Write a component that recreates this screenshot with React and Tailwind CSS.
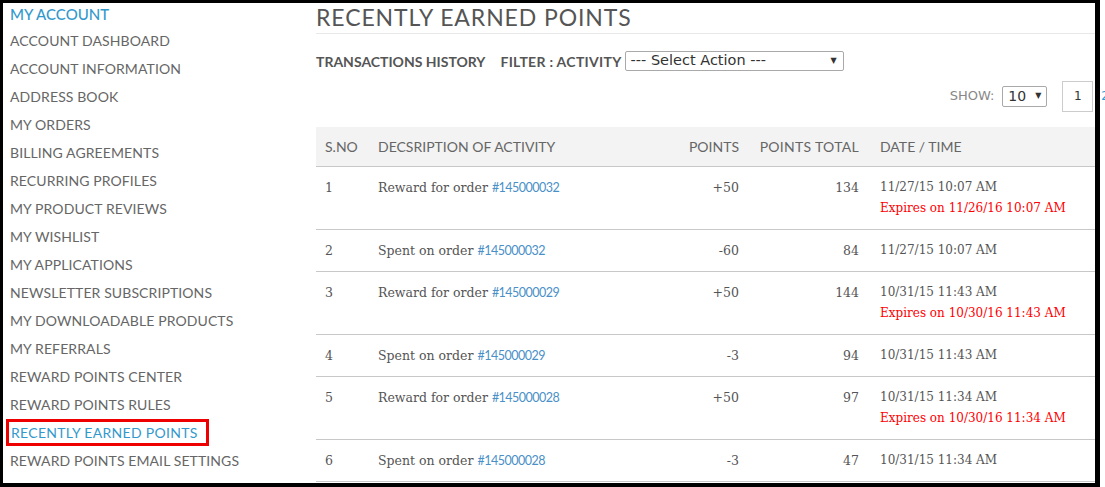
const sideLinks = [
  "ACCOUNT DASHBOARD",
  "ACCOUNT INFORMATION",
  "ADDRESS BOOK",
  "MY ORDERS",
  "BILLING AGREEMENTS",
  "RECURRING PROFILES",
  "MY PRODUCT REVIEWS",
  "MY WISHLIST",
  "MY APPLICATIONS",
  "NEWSLETTER SUBSCRIPTIONS",
  "MY DOWNLOADABLE PRODUCTS",
  "MY REFERRALS",
  "REWARD POINTS CENTER",
  "REWARD POINTS RULES",
  "RECENTLY EARNED POINTS",
  "REWARD POINTS EMAIL SETTINGS",
];

const rows = [
  { no: 1, kind: "Reward for order", order: "#145000032", points: "+50", total: 134, date: "11/27/15 10:07 AM", expires: "Expires on 11/26/16 10:07 AM" },
  { no: 2, kind: "Spent on order", order: "#145000032", points: "-60", total: 84, date: "11/27/15 10:07 AM" },
  { no: 3, kind: "Reward for order", order: "#145000029", points: "+50", total: 144, date: "10/31/15 11:43 AM", expires: "Expires on 10/30/16 11:43 AM" },
  { no: 4, kind: "Spent on order", order: "#145000029", points: "-3", total: 94, date: "10/31/15 11:43 AM" },
  { no: 5, kind: "Reward for order", order: "#145000028", points: "+50", total: 97, date: "10/31/15 11:34 AM", expires: "Expires on 10/30/16 11:34 AM" },
  { no: 6, kind: "Spent on order", order: "#145000028", points: "-3", total: 47, date: "10/31/15 11:34 AM" },
];

const sans = "font-['Lato','Open_Sans',sans-serif]";
const serif = "font-['DejaVu_Serif','Liberation_Serif',serif]";
const verdana = "font-['DejaVu_Sans','Liberation_Sans',sans-serif]";

function Sidebar() {
  return (
    <aside className={`w-[313px] shrink-0 pl-[7px] ${sans}`}>
      <div className="h-[23px] leading-[22px] text-[15px] font-medium text-[#3399cc]">MY ACCOUNT</div>
      <ul>
        {sideLinks.map((label) => {
          const active = label === "RECENTLY EARNED POINTS";
          return (
            <li key={label} className="h-[28px] flex items-center">
              {active ? (
                <span className="-ml-[4px] pl-[2px] pr-[8px] h-[27px] flex items-center border-[3px] border-[#ee0000] text-[14px] tracking-[0.3px] text-[#3399cc]">
                  {label}
                </span>
              ) : (
                <span className="text-[14px] tracking-[0.1px] text-[#666]">{label}</span>
              )}
            </li>
          );
        })}
      </ul>
    </aside>
  );
}

function Toolbar() {
  return (
    <>
      <div className="mt-[17px] h-[20px] flex items-center">
        <span className={`${sans} font-bold text-[14px] text-[#555]`}>TRANSACTIONS HISTORY</span>
        <span className={`${sans} font-bold text-[14px] tracking-[0.3px] text-[#555] ml-[15px] mr-[3px]`}>FILTER : ACTIVITY</span>
        <div className={`${verdana} w-[219px] h-[20px] border border-[#a9a9a9] rounded-[2px] flex items-center justify-between pl-[5px] pr-[6px] text-[14.5px] text-[#333]`}>
          <span>--- Select Action ---</span>
          <span className="text-[8px]">▼</span>
        </div>
      </div>
      <div className="mt-[10px] h-[30px] flex items-center justify-end">
        <span className={`${verdana} text-[13px] text-[#888] mr-[8px]`}>SHOW:</span>
        <div className={`${verdana} w-[45px] h-[21px] border border-[#a9a9a9] rounded-[2px] flex items-center justify-between pl-[5px] pr-[5px] text-[14px] text-[#333]`}>
          <span>10</span>
          <span className="text-[8px]">▼</span>
        </div>
        <div className={`${verdana} ml-[15px] w-[31px] h-[31px] border border-[#ccc] flex items-center justify-center text-[12px] text-[#333]`}>1</div>
        <span className={`${verdana} ml-[8px] -mr-[14px] text-[12px] text-[#3399cc]`}>2</span>
      </div>
    </>
  );
}

function PointsTable() {
  const cols = "grid grid-cols-[52px_316px_65px_120px_226px]";
  return (
    <div className="mt-[16px]">
      <div className={`${cols} h-[40px] items-center bg-[#f3f3f3] border-b border-[#c8c8c8] ${sans} text-[14px] text-[#666]`}>
        <div className="pl-[9px]">S.NO</div>
        <div className="pl-[10px]">DECSRIPTION OF ACTIVITY</div>
        <div className="pr-[10px] text-right">POINTS</div>
        <div className="pr-[10px] text-right tracking-[0.3px]">POINTS TOTAL</div>
        <div className="pl-[11px]">DATE / TIME</div>
      </div>
      {rows.map((r) => (
        <div key={r.no} className={`${cols} py-[10px] leading-[21px] border-b border-[#c8c8c8] text-[12.5px] text-[#555] ${serif}`}>
          <div className="pl-[9px]">{r.no}</div>
          <div className="pl-[10px]">
            {r.kind} <span className={`${sans} text-[12.5px] tracking-[-0.5px] text-[#4a90c8]`}>{r.order}</span>
          </div>
          <div className="pr-[10px] text-right">{r.points}</div>
          <div className="pr-[10px] text-right">{r.total}</div>
          <div className="pl-[11px] text-[12px]">
            <div>{r.date}</div>
            {r.expires && <div className="text-[#ff0000]">{r.expires}</div>}
          </div>
        </div>
      ))}
    </div>
  );
}

export default function App() {
  return (
    <div className="w-[1105px] h-[487px] bg-white overflow-hidden">
      <div className="w-[1100px] h-[487px] border-t-[3px] border-l-[3px] border-r-[5px] border-b-[4px] border-black flex">
        <Sidebar />
        <main className="w-[779px] shrink-0">
          <h1 className={`${sans} h-[31px] leading-[28px] text-[23px] tracking-[0.9px] text-[#555] border-b border-[#e8e8e8]`}>
            RECENTLY EARNED POINTS
          </h1>
          <Toolbar />
          <PointsTable />
        </main>
      </div>
    </div>
  );
}
